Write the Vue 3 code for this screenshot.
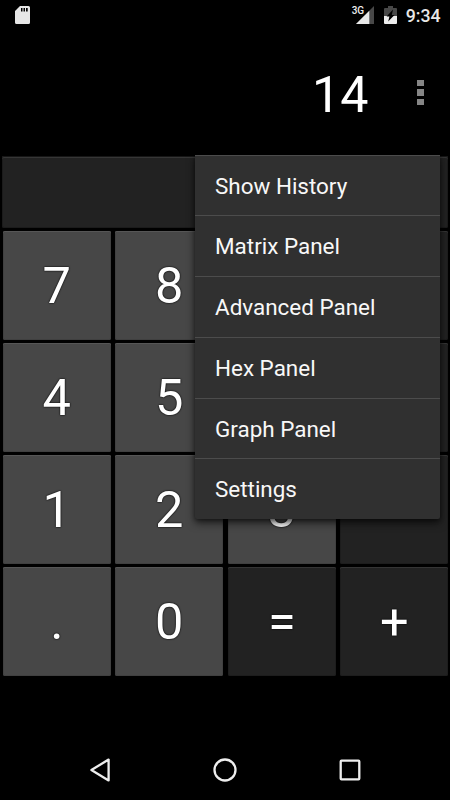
<template>
  <div class="calculator">
    <header class="status-bar">
      <svg class="status-bar__card" width="15" height="18" viewBox="0 0 15 18">
        <path fill="#e6e6e6" fill-rule="evenodd" d="M5 0h8.500a1.500 1.500 0 0 1 1.500 1.500v15a1.500 1.500 0 0 1-1.500 1.500h-12A1.500 1.500 0 0 1 0 16.500V5zM6 2v3.500h1.500V2zM8.500 2v3.500H10V2zM11 2v3.500h1.700V2z" />
      </svg>
      <div class="status-bar__right">
        <span class="status-bar__network">3G</span>
        <svg class="status-bar__signal" width="18" height="18" viewBox="0 0 18 18">
          <path fill="#484848" d="M18 0v18H0z" />
          <path fill="#e8e8e8" d="M13.300 4.700V18H0z" />
        </svg>
        <svg class="status-bar__battery" width="13" height="18" viewBox="0 0 13 18">
          <path fill="#484848" d="M4 0h5v2h3q1 0 1 1v7H0V3q0-1 1-1h3z" />
          <path fill="#ededed" d="M0 10h13v7q0 1-1 1H1q-1 0-1-1z" />
          <path fill="#000" d="M9 3.500L7.800 9H10.500L4.200 15.500L5.400 10.500H2.600z" />
        </svg>
        <span class="status-bar__time">9:34</span>
      </div>
    </header>

    <section class="display">
      <span class="display__value">14</span>
      <button class="display__more" aria-label="More options" @click="menuOpen = !menuOpen">
        <i></i><i></i><i></i>
      </button>
    </section>

    <button class="clear" aria-label="Delete"></button>

    <main class="keypad">
      <button
        v-for="key in keys"
        :key="key"
        class="key"
        :class="{ 'key--operator': isOperator(key) }"
      >
        {{ isCovered(key) ? '' : key }}
      </button>
    </main>

    <nav class="nav-bar">
      <svg width="22" height="26" viewBox="0 0 22 26">
        <path d="M19.600 2.600v20.800L2.400 13z" />
      </svg>
      <svg width="26" height="26" viewBox="0 0 26 26">
        <circle cx="13" cy="13" r="10.500" />
      </svg>
      <svg width="24" height="26" viewBox="0 0 24 26">
        <rect x="2.700" y="3.700" width="18.600" height="18.600" rx="0.800" />
      </svg>
    </nav>

    <ul v-if="menuOpen" class="menu" role="menu">
      <li v-for="item in menuItems" :key="item" class="menu__item" role="menuitem">{{ item }}</li>
    </ul>
  </div>
</template>

<script setup>
import { ref } from 'vue'

const menuOpen = ref(true)

const menuItems = [
  'Show History',
  'Matrix Panel',
  'Advanced Panel',
  'Hex Panel',
  'Graph Panel',
  'Settings'
]

const keys = [
  '7', '8', '9', '÷',
  '4', '5', '6', '×',
  '1', '2', '3', '−',
  '.', '0', '=', '+'
]

const isOperator = (key) => '÷×−=+'.includes(key)

// Labels that lie entirely under the open menu
const isCovered = (key) => menuOpen.value && '96÷×−'.includes(key)
</script>

<style>
body {
  background: #000;
}
</style>

<style scoped>
.calculator {
  position: relative;
  display: flex;
  flex-direction: column;
  width: 450px;
  height: 800px;
  overflow: hidden;
  background: #000;
  color: #fff;
  font-family: Roboto, sans-serif;
}

button {
  margin: 0;
  padding: 0;
  border: none;
  font-family: inherit;
  color: inherit;
}

.status-bar {
  display: flex;
  justify-content: space-between;
  height: 34px;
  padding: 6px 9.5px 0 15px;
  box-sizing: border-box;
}

.status-bar__right {
  display: flex;
  align-items: flex-start;
}

.status-bar__network {
  margin-right: -8px;
  font-size: 10px;
  line-height: 10px;
  font-weight: 500;
  color: #eee;
}

.status-bar__battery {
  margin: 0 8.5px 0 10px;
}

.status-bar__time {
  font-size: 17.7px;
  line-height: 20px;
  font-weight: 500;
  color: #e8e8e8;
}

.display {
  display: flex;
  align-items: center;
  justify-content: flex-end;
  height: 122px;
  padding-right: 26px;
  box-sizing: border-box;
}

.display__value {
  margin-right: 48.5px;
  font-size: 50.2px;
  line-height: 60px;
}

.display__more {
  display: flex;
  flex-direction: column;
  gap: 3px;
  width: 7px;
  margin-bottom: 5px;
  background: none;
}

.display__more i {
  height: 6.5px;
  background: #858585;
}

.clear {
  flex: none;
  height: 72px;
  margin: 0 2px 3px;
  border-radius: 2px;
  background: #222;
  box-shadow: inset 0 1px #161616, inset 0 2px #363636, inset 0 0 0 1px #1b1b1b;
}

.keypad {
  display: grid;
  grid-template-columns: repeat(4, 108px);
  grid-auto-rows: 109px;
  gap: 3px 4.5px;
  padding-left: 2.8px;
}

.key {
  padding-top: 1px;
  border-radius: 2px;
  background: #474747;
  box-shadow: inset 0 1px #565656, inset 0 0 0 1px #404040;
  font-size: 50.6px;
  line-height: 60px;
  text-shadow: 0 0 1px #000, 0 0 2px #000;
}

.key--operator {
  background: #222;
  box-shadow: inset 0 1px #353535, inset 0 0 0 1px #1d1d1d;
}

.nav-bar {
  display: flex;
  align-items: center;
  justify-content: space-between;
  margin-top: auto;
  height: 60px;
  padding: 0 88px 0 89px;
}

.nav-bar svg {
  fill: none;
  stroke: #eee;
  stroke-width: 2.3;
  stroke-linejoin: round;
}

/* Overflow menu floating above the keypad */
.menu {
  position: absolute;
  top: 154.75px;
  left: 195px;
  width: 245px;
  margin: 0;
  padding: 0;
  list-style: none;
  background: #303030;
  border-radius: 0 0 2px 2px;
  box-shadow: 0 4px 9px rgba(0, 0, 0, 0.6), 0 1px 4px rgba(0, 0, 0, 0.4);
}

.menu__item {
  height: 60.7px;
  padding-left: 20px;
  box-sizing: border-box;
  border-top: 1px solid #4c4c4c;
  font-size: 22.45px;
  line-height: 61.4px;
  color: #f8f8f8;
}
</style>
